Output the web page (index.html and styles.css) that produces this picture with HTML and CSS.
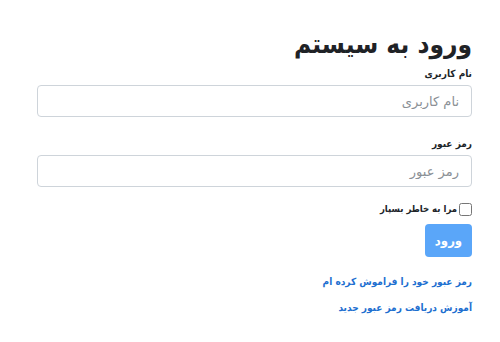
FILE: index.html
```html
<!DOCTYPE html>
<html lang="fa" dir="rtl">
<head>
<meta charset="utf-8">
<link rel="stylesheet" href="styles.css">
</head>
<body>
<div class="login">
  <h1 class="title">ورود به سیستم</h1>
  <form class="form">
    <div class="field">
      <label class="label" for="u">نام کاربری</label>
      <input class="input" id="u" type="text" placeholder="نام کاربری">
    </div>
    <div class="field field-last">
      <label class="label" for="p">رمز عبور</label>
      <input class="input" id="p" type="password" placeholder="رمز عبور">
    </div>
    <label class="remember"><input class="check" type="checkbox"> مرا به خاطر بسپار</label>
    <button class="btn" type="button">ورود</button>
    <a class="link" href="#">رمز عبور خود را فراموش کرده ام</a>
    <a class="link" href="#">آموزش دریافت رمز عبور جدید</a>
  </form>
</div>
</body>
</html>
```
FILE: styles.css
```css
html, body {
  margin: 0;
  padding: 0;
  background: #fff;
}
body {
  font-family: "DejaVu Sans Condensed", "DejaVu Sans", sans-serif;
  color: #212529;
}
.login {
  direction: rtl;
  padding: 22px 28px 0 37px;
}
.title {
  margin: 0;
  font-size: 26px;
  font-weight: bold;
  line-height: 44px;
  color: #1f2226;
}
.form {
  display: flex;
  flex-direction: column;
  align-items: flex-start;
}
.field {
  align-self: stretch;
  display: flex;
  flex-direction: column;
  margin-bottom: 19px;
}
.field-last {
  margin-bottom: 14px;
}
.label {
  font-size: 10px;
  font-weight: bold;
  line-height: 16px;
  margin-bottom: 3px;
}
.input {
  box-sizing: border-box;
  height: 32px;
  border: 1px solid #ced4da;
  border-radius: 4px;
  padding: 0 12px;
  font-family: "DejaVu Sans", sans-serif;
  font-size: 13px;
  direction: rtl;
}
.input::placeholder {
  color: #8a8f95;
}
.remember {
  display: flex;
  align-items: center;
  gap: 2px;
  font-size: 9.5px;
  font-weight: bold;
  line-height: 16px;
}
.check {
  margin: 0;
  width: 13px;
  height: 13px;
}
.btn {
  margin-top: 7px;
  width: 47px;
  height: 33px;
  border: none;
  border-radius: 4px;
  background: #5aa6f9;
  color: #fff;
  font-family: "DejaVu Sans Condensed", "DejaVu Sans", sans-serif;
  font-size: 13px;
  font-weight: bold;
}
.link {
  margin-top: 18px;
  font-size: 10px;
  font-weight: bold;
  color: #1e6fd0;
  text-decoration: none;
  line-height: 14px;
}
.link + .link {
  margin-top: 12px;
}
```
